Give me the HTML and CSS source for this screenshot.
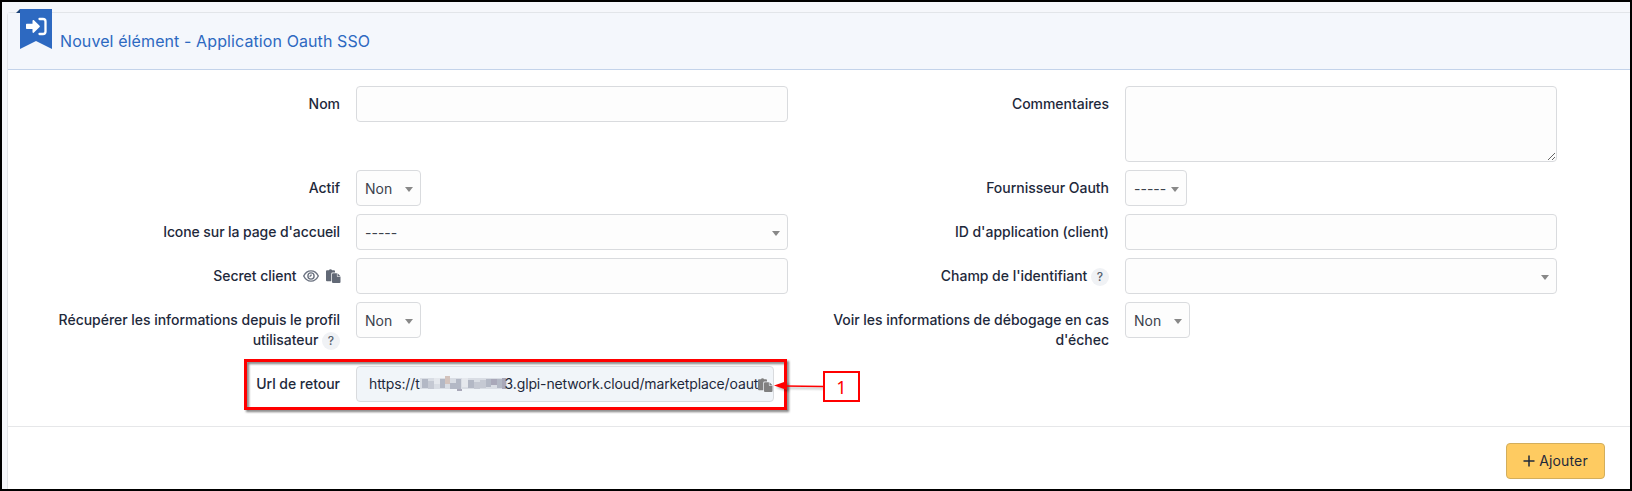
FILE: index.html
```html
<!DOCTYPE html>
<html lang="fr">
<head>
<meta charset="utf-8">
<title>Application Oauth SSO</title>
<link rel="stylesheet" href="styles.css">
</head>
<body>
<svg class="defs" width="0" height="0">
  <symbol id="paste" viewBox="0 0 15 14">
    <path d="M1 1.300h1.900a1.700 1.700 0 0 1 3.200 0H8a1 1 0 0 1 1 1v1.200H6.500A1.300 1.300 0 0 0 5.300 4.800v7.400H1a1 1 0 0 1-1-1V2.300a1 1 0 0 1 1-1z"/>
    <path d="M7 4.200h3.900v3a.6.600 0 0 0 .6.600h3V13a1 1 0 0 1-1 1H7a1 1 0 0 1-1-1V5.200a1 1 0 0 1 1-1z"/>
    <path d="M11.500 4.200l3 3h-3z"/>
  </symbol>
</svg>
<main class="frame">
  <section class="card">
    <header class="card-header">
      <div class="ribbon">
        <svg width="36" height="41" viewBox="0 0 36 41">
          <path d="M0 4L4 0v4z" fill="#1d4479"/>
          <path d="M4 0h32v40L20 32 4 40z" fill="#2d69c1"/>
          <path d="M11 14.800h5.500v-3c0-.9.900-1.100 1.500-.6l5.600 5.500c.4.400.4 1 0 1.400L18 23.600c-.6.600-1.500.2-1.500-.6v-3H11c-.6 0-1-.4-1-1v-3.200c0-.6.400-1 1-1z" fill="#fff"/>
          <path d="M23.500 10H27a2.500 2.500 0 0 1 2.500 2.500v10A2.500 2.500 0 0 1 27 25h-3.500" fill="none" stroke="#fff" stroke-width="2.300" stroke-linecap="round"/>
        </svg>
      </div>
      <h1 class="title">Nouvel élément - Application Oauth SSO</h1>
    </header>
    <form class="fields">
      <div class="field"><label class="label">Nom</label><div class="control"><input class="input" type="text"></div></div>
      <div class="field"><label class="label">Commentaires</label><div class="control"><textarea class="input area"></textarea></div></div>

      <div class="field"><label class="label">Actif</label><div class="control"><div class="select short">Non<i class="caret"></i></div></div></div>
      <div class="field"><label class="label">Fournisseur Oauth</label><div class="control"><div class="select tiny">-----<i class="caret"></i></div></div></div>

      <div class="field"><label class="label tight">Icone sur la page d'accueil</label><div class="control"><div class="select">-----<i class="caret"></i></div></div></div>
      <div class="field"><label class="label">ID d'application (client)</label><div class="control"><input class="input" type="text"></div></div>

      <div class="field"><label class="label">Secret client
        <svg class="eye" width="16" height="12" viewBox="0 0 16 12"><path d="M.7 6C2.400 2.600 5 .9 8 .9S13.600 2.600 15.300 6C13.600 9.400 11 11.100 8 11.100S2.400 9.400.7 6z"/><circle cx="8" cy="6" r="3.100"/><path d="M6.500 6.200A1.600 1.600 0 0 0 8.200 4.600"/></svg>
        <svg class="copy" width="15" height="14"><use href="#paste"/></svg></label><div class="control"><input class="input" type="text"></div></div>
      <div class="field"><label class="label">Champ de l'identifiant <span class="help">?</span></label><div class="control"><div class="select"><i class="caret"></i></div></div></div>

      <div class="field"><label class="label">Récupérer les informations depuis le profil utilisateur <span class="help">?</span></label><div class="control"><div class="select short">Non<i class="caret"></i></div></div></div>
      <div class="field"><label class="label">Voir les informations de débogage en cas d'échec</label><div class="control"><div class="select short">Non<i class="caret"></i></div></div></div>

      <div class="field"><label class="label">Url de retour</label><div class="control"><div class="url"><span>https://t</span><svg class="masked" width="87" height="16" viewBox="0 0 87 16">
        <path fill="#d9dde4" d="M0 2h87v11H0z"/>
        <path fill="#b3b8c5" d="M2 3h6v9H2zM20 3h5v9h-5zM30 7h6v6h-6zM36 3h5v10h-5zM48 4h6v8h-6zM66 3h5v8h-5zM77 3h7v9h-7z"/>
        <path fill="#c5c9d3" d="M8 5h6v8H8zM54 6h6v7h-6zM60 4h6v8h-6z"/>
        <path fill="#d3c3bd" d="M25 0h5v8h-5z"/>
        <path fill="#a9a8b9" d="M71 3h6v6h-6zM37 13h5v2h-5zM82 2h4v11h-4z"/>
        <path fill="#e5e8ed" d="M14 2h6v6h-6zM42 2h6v9h-6z"/></svg><span>3.glpi-network.cloud/marketplace/oaut</span><svg class="copy url-copy" width="15" height="14"><use href="#paste"/></svg></div></div></div>
    </form>
    <footer class="card-footer">
      <button class="add" type="button"><svg width="12" height="12" viewBox="0 0 12 12"><path d="M6 .5v11M.5 6h11" stroke="#1e293b" stroke-width="1.500"/></svg>Ajouter</button>
    </footer>
  </section>
  <div class="highlight"></div>
  <svg class="arrow" width="52" height="16" viewBox="0 0 52 16"><path d="M10 7l40 .5" stroke="#f00" stroke-width="1.500"/><path d="M0 6.500L13 2v9z" fill="#f00"/></svg>
  <div class="marker">1</div>
</main>
</body>
</html>
```
FILE: styles.css
```css
* { box-sizing: border-box; }
body { margin: 0; font: 14px/20px Inter, sans-serif; color: #1e293b; }
.defs { position: absolute; }
.frame { position: relative; height: 491px; padding: 10px 0 0 5px; border: 2px solid #000; background: #f5f7fb; overflow: hidden; }
.card { height: 480px; border: 1px solid #e2e5e9; border-right: 0; border-radius: 4px 0 0 0; background: #fff; }
.card-header { position: relative; height: 57px; padding: 18px 0 0 52px; border-bottom: 1px solid #c3d3ea; background: #f4f7fc; }
.ribbon { position: absolute; left: 8px; top: -4px; }
.title { margin: 0; font-size: 16px; line-height: 20px; font-weight: 400; letter-spacing: .1px; color: #2d69c1; }
.fields { display: grid; grid-template-columns: 769px 769px; row-gap: 8px; padding: 16px 0 0 19px; }
.field { display: flex; align-items: flex-start; }
.label { width: 321px; padding: 8px 8px 8px 0; text-align: right; font-weight: 500; letter-spacing: -.03px; }
.tight { letter-spacing: -.09px; }
.control { width: 448px; padding: 0 8px; }
.input, .select, .url { display: block; width: 432px; height: 36px; border: 1px solid #d9dbde; border-radius: 4px; background: #fdfdfd; font: inherit; }
.area { height: 76px; resize: vertical; }
.select { display: flex; align-items: center; justify-content: space-between; padding: 2px 7px 0 8px; color: #3b424c; }
.short { width: 65px; }
.tiny { width: 62px; }
.caret { margin-left: auto; border: 4px solid transparent; border-top: 5px solid #888; border-bottom: 0; }
.eye { margin: 0 3px 0 3px; vertical-align: -1px; fill: none; stroke: #6b7280; stroke-width: 1.400; }
.copy { vertical-align: -2px; fill: #626976; }
.label .copy { margin-right: -1px; }
.help { display: inline-block; width: 18px; height: 18px; border-radius: 50%; background: #f0f2f5; color: #56606e; font-size: 12px; font-weight: 500; line-height: 18px; text-align: center; }
.url { position: relative; display: flex; align-items: center; width: 418px; padding-left: 12px; background: #f1f5f9; white-space: nowrap; letter-spacing: -.13px; }
.masked { margin-right: -2px; }
.url-copy { position: absolute; right: 0; top: 11px; fill: #808080; }
.card-footer { display: flex; justify-content: flex-end; margin-top: 24px; padding: 16px 25px 0 0; border-top: 1px solid #e6e7e9; }
.add { display: flex; align-items: center; justify-content: center; gap: 4px; width: 99px; height: 36px; border: 1px solid #d3ae5c; border-radius: 4px; background: #fecb61; color: #1e293b; font: 400 14px/20px Inter, sans-serif; letter-spacing: .15px; }
.highlight { position: absolute; left: 242px; top: 357px; width: 543px; height: 51px; border: 3px solid #f00; filter: drop-shadow(2px 2px 1px rgba(0,0,0,.5)); }
.arrow { position: absolute; left: 772px; top: 377px; filter: drop-shadow(2px 2px 1px rgba(0,0,0,.3)); }
.marker { position: absolute; left: 821px; top: 369px; width: 37px; height: 31px; border: 2px solid #f00; background: #fff; color: #f00; font: 18px/28px "Noto Sans", sans-serif; text-align: center; }
```
